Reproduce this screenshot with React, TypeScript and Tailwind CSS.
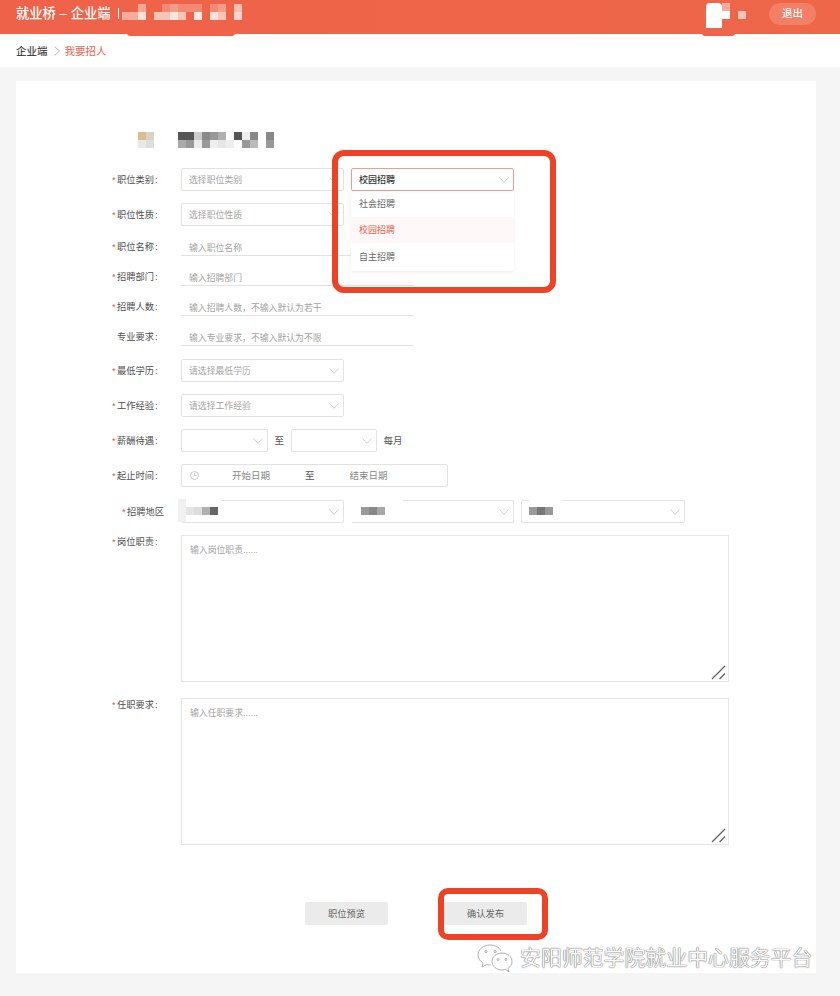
import type { ReactNode } from 'react';

const headerMosaic = [
  ['bg-[#ee6449]', 'bg-[#ee6449]', 'bg-[#f4a797]', 'bg-[#ee6449]', 'bg-[#ee6449]', 'bg-[#f08a75]', 'bg-[#f29c8a]', 'bg-[#f08a75]', 'bg-[#f08a75]', 'bg-[#f08a75]', 'bg-[#ee6449]', 'bg-[#f08a75]', 'bg-[#f29c8a]', 'bg-[#ee6449]', 'bg-[#f7bfb2]'],
  ['bg-[#f5ac9c]', 'bg-[#f5ac9c]', 'bg-[#fce0da]', 'bg-[#ee6449]', 'bg-[#f7c4b8]', 'bg-[#f7c4b8]', 'bg-[#fde4de]', 'bg-[#f7c4b8]', 'bg-[#ee6449]', 'bg-[#fde8e3]', 'bg-[#ee6449]', 'bg-[#fce0da]', 'bg-[#f7c4b8]', 'bg-[#ee6449]', 'bg-[#fbd5cd]'],
];

const titleMosaicA = [
  ['bg-[#dcbd8c]', 'bg-[#d9d2c6]'],
  ['bg-[#e8e8e8]', 'bg-[#dedede]'],
];

const titleMosaicB = [
  ['bg-[#555555]', 'bg-[#555555]', 'bg-[#cccccc]', 'bg-[#8a8a8a]', 'bg-[#999999]', 'bg-[#b0b0b0]', 'bg-white', 'bg-[#555555]', 'bg-[#eeeeee]', 'bg-[#888888]', 'bg-white', 'bg-[#888888]'],
  ['bg-[#aaaaaa]', 'bg-[#999999]', 'bg-[#ececec]', 'bg-[#999999]', 'bg-[#eeeeee]', 'bg-[#e6e6e6]', 'bg-[#eeeeee]', 'bg-white', 'bg-[#999999]', 'bg-[#bbbbbb]', 'bg-white', 'bg-[#999999]'],
];

function Mosaic({ rows, cell = 'size-2' }: { rows: string[][]; cell?: string }) {
  return (
    <div className="flex flex-col">
      {rows.map((row, i) => (
        <div key={i} className="flex">
          {row.map((color, j) => (
            <div key={j} className={`${cell} ${color}`} />
          ))}
        </div>
      ))}
    </div>
  );
}

function Chevron({ className = '' }: { className?: string }) {
  return (
    <svg viewBox="0 0 10 6" className={`h-[6px] w-[10px] shrink-0 ${className}`} fill="none" stroke="#c8c8c8" strokeWidth="0.9">
      <path d="M0.5 0.500 5 5.300 9.500 0.500" />
    </svg>
  );
}

function Label({ children, required = true, colon = true }: { children: string; required?: boolean; colon?: boolean }) {
  return (
    <div className="flex w-[69px] shrink-0 pt-[2px] text-[9.25px] text-[#4d4d4d]">
      <span className="w-[5px] text-[#e8513f]">{required ? '*' : ''}</span>
      <span>{children}</span>
      {colon && <span className="ml-[1px]">:</span>}
    </div>
  );
}

function Select({ placeholder, className = 'w-[163px]', active = false }: { placeholder?: string; className?: string; active?: boolean }) {
  return (
    <div
      className={`flex h-[23px] items-center justify-between rounded-[2px] border pl-[7px] pr-[4px] ${
        active ? 'border-[#f09a90] pl-2 text-[9px] font-medium text-[#333]' : 'border-[#e2e2e2] text-[8.85px] text-[#a3a3a3]'
      } ${className}`}
    >
      <span className="pt-[2px]">{placeholder}</span>
      <Chevron className="ml-auto" />
    </div>
  );
}

function Row({ children, className = '' }: { children: ReactNode; className?: string }) {
  return <div className={`flex items-center ${className}`}>{children}</div>;
}

function LineInput({ label, placeholder, required }: { label: string; placeholder: string; required?: boolean }) {
  return (
    <Row>
      <Label required={required}>{label}</Label>
      <div className="flex h-[18px] w-[233px] items-center border-b border-[#e2e2e2] pl-2 pt-[4px] text-[8.85px] text-[#a3a3a3]">
        {placeholder}
      </div>
    </Row>
  );
}

function TextBlock({ label, placeholder }: { label: string; placeholder: string }) {
  return (
    <div className="flex">
      <div className="-mt-px">
        <Label>{label}</Label>
      </div>
      <div className="relative h-[147px] w-[548px] border border-[#e6e6e6] pl-2 pt-[8px] text-[8.85px] text-[#a3a3a3]">
        {placeholder}
        <svg viewBox="0 0 15 15" className="absolute bottom-[1px] right-[2px] size-[15px]" fill="none" stroke="#666" strokeWidth="1.4">
          <path d="M1 14 14 1M8.500 14 14 8.500" />
        </svg>
      </div>
    </div>
  );
}

function Region({ mosaic, patch }: { mosaic: string[]; patch: string }) {
  return (
    <div className={`absolute -top-px flex h-[23px] items-center bg-white ${patch}`}>
      <div className="flex">
        {mosaic.map((color, i) => (
          <div key={i} className={`h-2 w-[8px] ${color}`} />
        ))}
      </div>
    </div>
  );
}

export default function App() {
  return (
    <div className="relative h-[996px] w-[840px] overflow-hidden bg-[#f5f5f5] font-['Liberation_Sans','Noto_Sans_CJK_SC',sans-serif]">
      <header className="relative flex h-[34px] items-center bg-gradient-to-r from-[#ee6249] to-[#ee6749] pb-[7px] pl-4 pr-6 text-white">
        <span className="text-[13.3px] font-medium leading-none">就业桥 – 企业端</span>
        <span className="ml-[7px] h-[11px] w-px bg-white" />
        <div className="-mt-[3px] ml-[3px]">
          <Mosaic rows={headerMosaic} />
        </div>
        <div className="absolute left-[127px] top-[33px] h-[2.5px] w-[108px] rounded-b-full bg-[#ee6449]" />
        <div className="absolute left-[702px] top-[33px] h-[3px] w-[33px] rounded-b-md bg-[#ee6449]" />
        <div className="ml-auto flex items-center">
          <div className="relative mr-[23px] mt-[4px] h-[25px] w-[40px]">
            <div className="absolute left-0 top-0 h-[25px] w-4 rounded-t-sm bg-white" />
            <div className="absolute left-4 top-[8px] h-[8px] w-2 bg-white" />
            <div className="absolute left-4 top-0 h-[8px] w-2 bg-[#f4ad9e]" />
            <div className="absolute left-8 top-[8px] h-[8px] w-2 bg-[#f9c4b8]" />
          </div>
          <button className="flex h-[22px] w-[47px] items-center justify-center rounded-full bg-[#f27f66] text-[10.5px] font-medium text-white">退出</button>
        </div>
      </header>

      <nav className="flex h-[33px] items-center bg-white pl-4 text-[10.5px]">
        <span className="pt-[2px] font-medium text-[#444]">企业端</span>
        <svg viewBox="0 0 6 10" className="ml-[6px] mr-[5px] h-[10px] w-[6px]" fill="none" stroke="#aaaaaa" strokeWidth="0.8">
          <path d="M0.500 0.500 5.500 5 0.500 9.500" />
        </svg>
        <span className="pt-[2px] text-[#ee5f4c]">我要招人</span>
      </nav>

      <main className="relative ml-4 mt-[14px] h-[892px] w-[800px] bg-white pl-[96px] pt-[51px]">
        <div className="ml-[26px] flex gap-6">
          <Mosaic rows={titleMosaicA} />
          <Mosaic rows={titleMosaicB} />
        </div>

        <form className="mt-5 flex flex-col gap-3">
          <Row>
            <Label>职位类别</Label>
            <Select placeholder="选择职位类别" />
            <div className="relative ml-[7px]">
              <Select placeholder="校园招聘" active />
              <ul className="absolute left-0 top-[23px] z-10 h-[80px] w-[163px] bg-white text-[9px] text-[#666] shadow-[0_1px_3px_rgba(0,0,0,0.08)]">
                <li className="flex h-[26px] items-center pl-2 pt-[2px]">社会招聘</li>
                <li className="flex h-[26px] items-center bg-[#fff8f8] pl-2 pt-[2px] text-[#ee5a4d]">校园招聘</li>
                <li className="flex h-[28px] items-center pl-2 pt-[2px]">自主招聘</li>
              </ul>
            </div>
          </Row>
          <Row>
            <Label>职位性质</Label>
            <Select placeholder="选择职位性质" />
          </Row>
          <LineInput label="职位名称" placeholder="输入职位名称" />
          <LineInput label="招聘部门" placeholder="输入招聘部门" />
          <LineInput label="招聘人数" placeholder="输入招聘人数，不输入默认为若干" />
          <LineInput label="专业要求" placeholder="输入专业要求，不输入默认为不限" required={false} />
          <Row className="mt-px">
            <Label>最低学历</Label>
            <Select placeholder="请选择最低学历" />
          </Row>
          <Row>
            <Label>工作经验</Label>
            <Select placeholder="请选择工作经验" />
          </Row>
          <Row>
            <Label>薪酬待遇</Label>
            <Select className="w-[87px]" />
            <span className="mx-[6.5px] pt-[2px] text-[9.5px] text-[#555]">至</span>
            <Select className="w-[86px]" />
            <span className="ml-[7px] pt-[2px] text-[9.5px] text-[#555]">每月</span>
          </Row>
          <Row>
            <Label>起止时间</Label>
            <div className="flex h-[23px] w-[267px] items-center rounded-[2px] border border-[#e2e2e2] pl-2 text-[9.5px] text-[#888]">
              <svg viewBox="0 0 10 10" className="size-[9px]" fill="none" stroke="#aaa" strokeWidth="0.7">
                <circle cx="5" cy="5" r="4.400" />
                <path d="M5 2.500V5H7" />
              </svg>
              <span className="ml-[33px] pt-[2px]">开始日期</span>
              <span className="ml-[35px] pt-[2px] text-[#555]">至</span>
              <span className="ml-[35px] pt-[2px]">结束日期</span>
            </div>
          </Row>
          <Row className="relative mt-px">
            <div className="pl-[10px]">
              <Label colon={false}>招聘地区</Label>
            </div>
            <div className="relative -ml-[10px]">
              <Select />
              <div className="absolute -left-[3px] -top-px h-[23px] w-[8px] bg-[#f0f0f0]" />
              <div className="absolute left-[5px] -top-px flex h-[23px] w-[36px] items-center bg-white">
                <Mosaic rows={[['bg-[#e4e4e4]', 'bg-[#dddddd]', 'bg-[#b0b0b0]', 'bg-[#666666]']]} />
              </div>
            </div>
            <div className="relative ml-[7px]">
              <Select />
              <Region mosaic={['bg-[#9a9a9a]', 'bg-[#888888]', 'bg-[#a8a8a8]']} patch="-left-px w-[53px] pl-[11px]" />
            </div>
            <div className="relative ml-[7px]">
              <Select className="w-[164px]" />
              <Region mosaic={['bg-[#9a9a9a]', 'bg-[#777777]', 'bg-[#999999]']} patch="left-[8px] w-[32px]" />
            </div>
          </Row>
          <TextBlock label="岗位职责" placeholder="输入岗位职责......" />
          <div className="mt-1">
            <TextBlock label="任职要求" placeholder="输入任职要求......" />
          </div>
        </form>

        <div className="ml-[193px] mt-[57px] flex gap-[56px]">
          <button className="h-[23px] w-[83px] rounded-[2px] bg-[#ebebeb] pt-[2px] text-[9.25px] text-[#666]">职位预览</button>
          <button className="h-[23px] w-[83px] rounded-[2px] bg-[#ebebeb] pt-[2px] text-[9.25px] text-[#666]">确认发布</button>
        </div>

        <div className="absolute left-[461px] top-[863px] flex items-center gap-[7px]">
          <svg viewBox="0 0 36 29" className="h-[29px] w-[36px]" fill="none" stroke="#999999" strokeWidth="0.8">
            <path d="M24 7C22 3 18 1 13 1 6.500 1 1 5.500 1 11c0 3.300 2 6.200 5 8L5 23l5-2.500c1.200.3 2.300.5 3.500.5" />
            <path d="M25 9c-5.500 0-10 3.800-10 8.500S19.500 26 25 26c1.200 0 2.400-.2 3.500-.6L32 28l-1-3.600c2.500-1.600 4-4 4-6.900C35 12.800 30.500 9 25 9Z" />
            <circle cx="9" cy="7.500" r="1.100" />
            <circle cx="18" cy="7.500" r="1.100" />
            <circle cx="21" cy="15.500" r="1" />
            <circle cx="29" cy="15.500" r="1" />
          </svg>
          <span className="text-[20.9px] leading-none text-[#fafafa] [text-shadow:0_0_1px_#555,0_0_1px_#777]">安阳师范学院就业中心服务平台</span>
        </div>
      </main>

      <div className="pointer-events-none absolute left-[332px] top-[150px] z-20 h-[143px] w-[224px] rounded-[12px] border-[6px] border-[#ee4226]" />
      <div className="pointer-events-none absolute left-[438px] top-[888px] z-20 h-[52px] w-[110px] rounded-[10px] border-[6px] border-[#ee4226]" />
    </div>
  );
}
